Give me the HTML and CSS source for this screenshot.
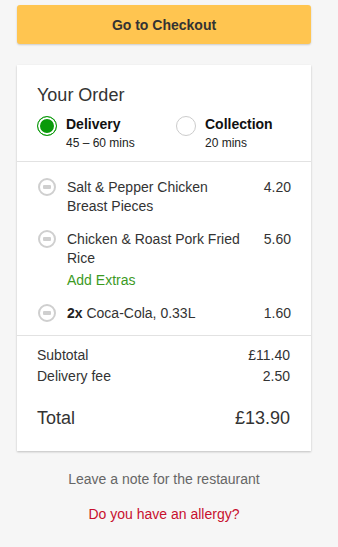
FILE: index.html
```html
<!DOCTYPE html>
<html>
<head>
<meta charset="utf-8">
<link rel="stylesheet" href="styles.css">
</head>
<body>
<div class="wrap">
  <button class="checkout">Go to Checkout</button>
  <div class="card">
    <div class="head">
      <h2 class="title">Your Order</h2>
      <div class="modes">
        <div class="mode">
          <span class="radio on"></span>
          <div class="mode-text">
            <div class="mode-name">Delivery</div>
            <div class="mode-time">45 – 60 mins</div>
          </div>
        </div>
        <div class="mode">
          <span class="radio"></span>
          <div class="mode-text">
            <div class="mode-name">Collection</div>
            <div class="mode-time">20 mins</div>
          </div>
        </div>
      </div>
    </div>
    <div class="items">
      <div class="item">
        <span class="minus"></span>
        <div class="item-name">Salt &amp; Pepper Chicken Breast Pieces</div>
        <div class="item-price">4.20</div>
      </div>
      <div class="item">
        <span class="minus"></span>
        <div class="item-name">Chicken &amp; Roast Pork Fried Rice<a class="extras">Add Extras</a></div>
        <div class="item-price">5.60</div>
      </div>
      <div class="item">
        <span class="minus"></span>
        <div class="item-name"><b>2x</b> Coca-Cola, 0.33L</div>
        <div class="item-price">1.60</div>
      </div>
    </div>
    <div class="totals">
      <div class="row"><span>Subtotal</span><span>£11.40</span></div>
      <div class="row"><span>Delivery fee</span><span>2.50</span></div>
      <div class="row total"><span>Total</span><span>£13.90</span></div>
    </div>
  </div>
  <p class="note">Leave a note for the restaurant</p>
  <p class="allergy">Do you have an allergy?</p>
</div>
</body>
</html>
```
FILE: styles.css
```css
html, body {
  margin: 0;
  padding: 0;
  background: #f6f6f6;
  font-family: "Liberation Sans", Arial, sans-serif;
  color: #333;
}
.wrap {
  width: 294px;
  margin-left: 17px;
  padding-top: 5px;
}
.checkout {
  display: block;
  width: 100%;
  height: 39px;
  border: 0;
  border-radius: 3px;
  background: #ffc550;
  box-shadow: 0 1px 2px rgba(0,0,0,0.18);
  font-family: "Liberation Sans", Arial, sans-serif;
  font-weight: bold;
  font-size: 14px;
  color: #333;
  padding: 0;
}
.card {
  margin-top: 21px;
  background: #fff;
  box-shadow: 0 1px 2px rgba(0,0,0,0.22);
}
.head {
  padding: 19px 20px 8px 20px;
  border-bottom: 1px solid #e2e2e2;
}
.title {
  margin: 0;
  font-size: 18px;
  font-weight: normal;
  line-height: 22px;
  color: #333;
}
.modes {
  display: flex;
  margin-top: 9px;
}
.mode {
  display: flex;
  flex: none;
  width: 139px;
  gap: 9px;
}
.radio {
  width: 18px;
  height: 18px;
  border-radius: 50%;
  border: 1px solid #ccc;
  margin-top: 1px;
  flex: none;
  box-sizing: content-box;
}
.radio.on {
  border-color: #0b9a0b;
  background: #0a9a0a;
  box-shadow: inset 0 0 0 2px #fff;
}
.mode-name {
  font-weight: bold;
  font-size: 14px;
  line-height: 18px;
  color: #111;
}
.mode-time {
  font-size: 12px;
  line-height: 20px;
  color: #222;
}
.items {
  padding: 16px 20px 12px 20px;
  border-bottom: 1px solid #e2e2e2;
  display: flex;
  flex-direction: column;
  gap: 14px;
}
.item {
  display: flex;
  font-size: 14px;
  line-height: 19px;
}
.minus {
  flex: none;
  width: 14px;
  height: 14px;
  border: 2px solid #cfcfcf;
  border-radius: 50%;
  margin-top: 0px;
  margin-left: 1px;
  margin-right: 11px;
  position: relative;
}
.minus::after {
  content: "";
  position: absolute;
  left: 3px;
  right: 3px;
  top: 5px;
  height: 4px;
  border-radius: 1px;
  background: #cfcfcf;
}
.item-name {
  flex: 1;
  color: #333;
}
.item-name b {
  color: #222;
}
.extras {
  display: block;
  color: #3c9a1f;
  margin-top: 3px;
}
.item-price {
  flex: none;
  width: 50px;
  text-align: right;
  color: #333;
}
.totals {
  padding: 9px 21px 21px 20px;
}
.row {
  display: flex;
  justify-content: space-between;
  font-size: 14px;
  line-height: 21px;
}
.row.total {
  font-size: 18px;
  line-height: 24px;
  margin-top: 19px;
}
.note {
  margin: 20px 0 0 0;
  text-align: center;
  font-size: 14px;
  line-height: 16px;
  color: #666;
}
.allergy {
  margin: 19px 0 0 0;
  text-align: center;
  font-size: 14px;
  line-height: 16px;
  color: #c8102e;
}
```
